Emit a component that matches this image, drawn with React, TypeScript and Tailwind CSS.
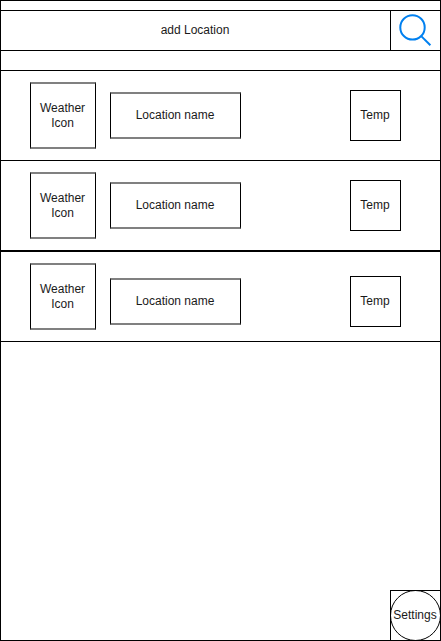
interface LocationRow {
  frame: string;
  nameOffset: string;
  tempOffset: string;
}

const rows: LocationRow[] = [
  { frame: 'h-[90px] border-b', nameOffset: 'mt-[21px]', tempOffset: 'mt-[19px]' },
  { frame: 'h-[91px] border-b-2', nameOffset: 'mt-[21px]', tempOffset: 'mt-[19px]' },
  { frame: 'h-[90px] border-b', nameOffset: 'mt-[26px]', tempOffset: 'mt-[24px]' },
];

const softBox =
  'flex shrink-0 items-center justify-center border-x border-y-2 border-x-black border-y-[#808080] pr-px text-center';

function Row({ frame, nameOffset, tempOffset }: LocationRow) {
  return (
    <li className={`flex shrink-0 items-start border-black ${frame}`}>
      <div className={`${softBox} mt-[11px] ml-[29px] h-[67px] w-[66px]`}>
        <span>
          Weather
          <br />
          Icon
        </span>
      </div>
      <div className={`${softBox} ml-[14px] h-[47px] w-[131px] ${nameOffset}`}>Location name</div>
      <div
        className={`ml-[109px] flex h-[51px] w-[51px] shrink-0 items-center justify-center border border-black pr-px ${tempOffset}`}
      >
        Temp
      </div>
    </li>
  );
}

export default function App() {
  return (
    <main className="flex h-[641px] w-[441px] flex-col border border-black bg-white font-['Liberation_Sans',Arial,sans-serif] text-[12px] leading-[15px] text-[#1a1a1a]">
      <div className="h-[10px] shrink-0 border-b border-black" />
      <header className="flex h-[40px] shrink-0 border-b border-black">
        <div className="flex w-[389px] items-center justify-center pr-px">add Location</div>
        <button type="button" aria-label="Search" className="w-[50px] border-l border-black">
          <svg width="49" height="39" viewBox="391 11 49 39" fill="none" stroke="#0080f0" strokeWidth="2">
            <circle cx="412.5" cy="27.4" r="12.2" />
            <path d="M421.2 36.1 L430.4 45.3" />
          </svg>
        </button>
      </header>
      <div className="h-[20px] shrink-0 border-b border-black" />
      <ul>
        {rows.map((row, index) => (
          <Row key={index} {...row} />
        ))}
      </ul>
      <footer className="mt-auto flex justify-end">
        <button
          type="button"
          className="relative flex h-[50px] w-[50px] items-center justify-center border-t border-l border-black pr-px"
        >
          <svg
            className="absolute -top-px -left-px overflow-visible"
            width="51"
            height="51"
            viewBox="0 0 51 51"
            fill="none"
            stroke="#000"
          >
            <circle cx="25.5" cy="25.5" r="25" />
          </svg>
          <span>Settings</span>
        </button>
      </footer>
    </main>
  );
}
